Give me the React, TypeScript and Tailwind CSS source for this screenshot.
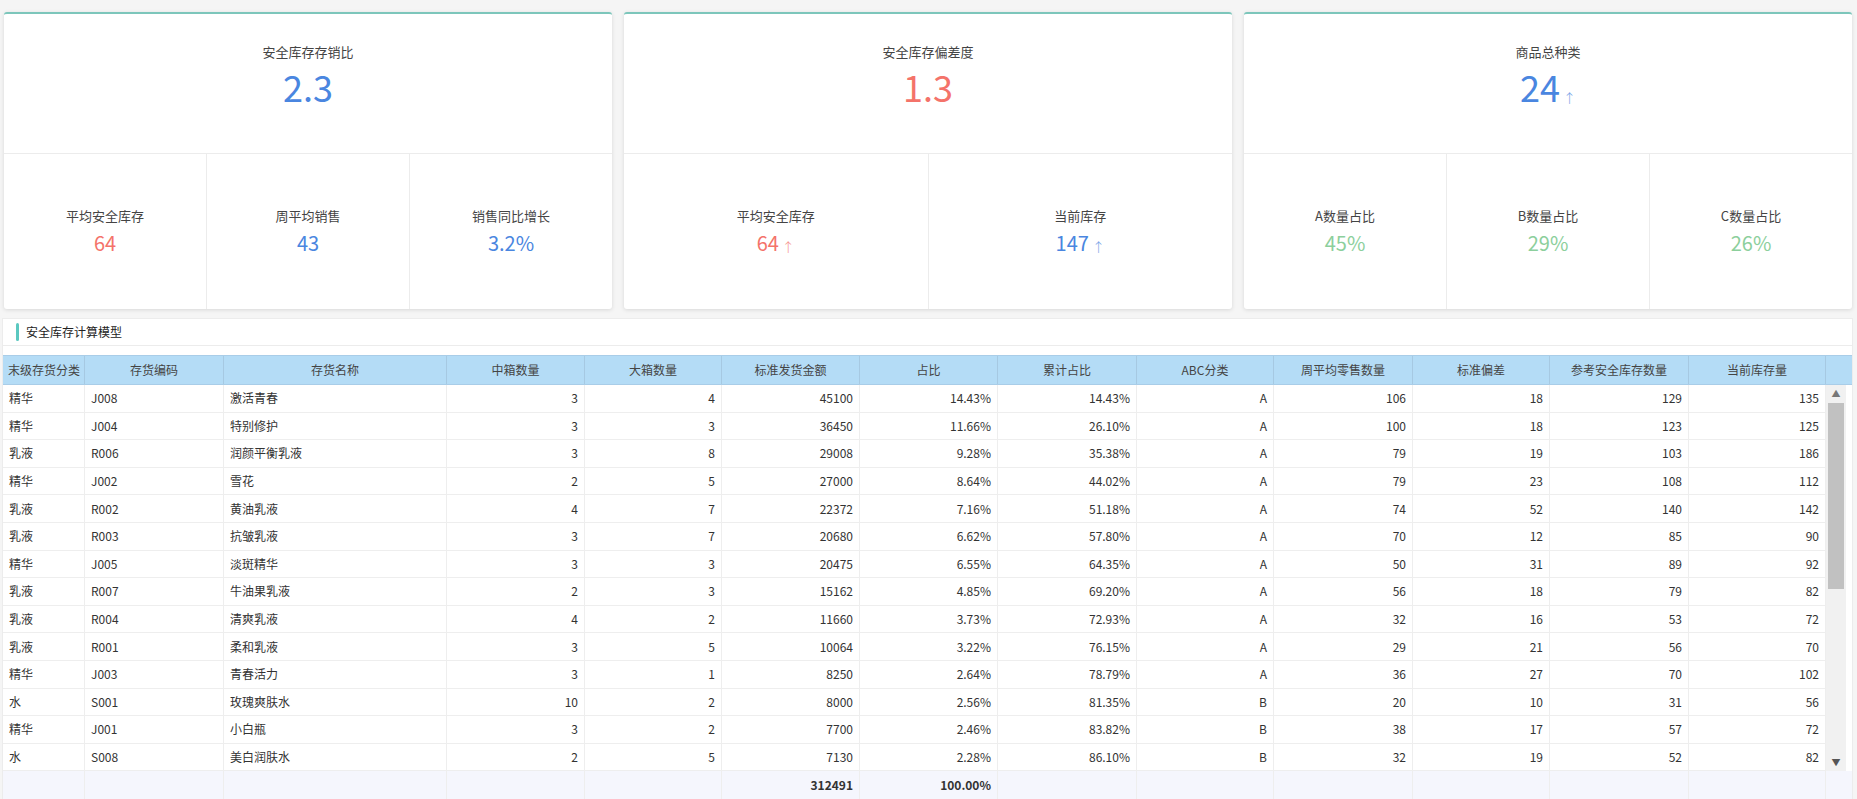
import React from "react";

const rows: (string | number)[][] = [
  ["精华","J008","激活青春",3,4,45100,"14.43%","14.43%","A",106,18,129,135],
  ["精华","J004","特别修护",3,3,36450,"11.66%","26.10%","A",100,18,123,125],
  ["乳液","R006","润颜平衡乳液",3,8,29008,"9.28%","35.38%","A",79,19,103,186],
  ["精华","J002","雪花",2,5,27000,"8.64%","44.02%","A",79,23,108,112],
  ["乳液","R002","黄油乳液",4,7,22372,"7.16%","51.18%","A",74,52,140,142],
  ["乳液","R003","抗皱乳液",3,7,20680,"6.62%","57.80%","A",70,12,85,90],
  ["精华","J005","淡斑精华",3,3,20475,"6.55%","64.35%","A",50,31,89,92],
  ["乳液","R007","牛油果乳液",2,3,15162,"4.85%","69.20%","A",56,18,79,82],
  ["乳液","R004","清爽乳液",4,2,11660,"3.73%","72.93%","A",32,16,53,72],
  ["乳液","R001","柔和乳液",3,5,10064,"3.22%","76.15%","A",29,21,56,70],
  ["精华","J003","青春活力",3,1,8250,"2.64%","78.79%","A",36,27,70,102],
  ["水","S001","玫瑰爽肤水",10,2,8000,"2.56%","81.35%","B",20,10,31,56],
  ["精华","J001","小白瓶",3,2,7700,"2.46%","83.82%","B",38,17,57,72],
  ["水","S008","美白润肤水",2,5,7130,"2.28%","86.10%","B",32,19,52,82],
];
const heads = ["末级存货分类","存货编码","存货名称","中箱数量","大箱数量","标准发货金额","占比","累计占比","ABC分类","周平均零售数量","标准偏差","参考安全库存数量","当前库存量"];
const widths = [82,139,223,138,137,138,138,139,137,139,137,139,137];

function Card({ title, value, color, arrow, subs }: { title: string; value: string; color: string; arrow?: boolean; subs: { l: string; v: string; c: string; a?: boolean }[] }) {
  return (
    <div className="w-[608px] h-[297px] bg-white border-t-2 border-[#7cc6bb] rounded-[3px] shadow-[0_1px_4px_rgba(0,0,0,0.12)] flex flex-col">
      <div className="h-[140px] flex flex-col items-center border-b border-[#ececec]">
        <div className="mt-[28px] text-[13px] text-[#444]">{title}</div>
        <div className={`mt-[2px] text-[36px] leading-[44px] ${color} flex items-end`}>
          {value}{arrow && <span className="text-[13px] leading-[20px] ml-[3px] font-light opacity-80">↑</span>}
        </div>
      </div>
      <div className="flex-1 flex">
        {subs.map((s, i) => (
          <div key={i} className={`flex-1 flex flex-col items-center justify-center ${i > 0 ? "border-l border-[#ececec]" : ""}`}>
            <div className="text-[13px] text-[#444]">{s.l}</div>
            <div className={`mt-[4px] text-[20px] leading-[28px] ${s.c} flex items-end`}>
              {s.v}{s.a && <span className="text-[13px] leading-[20px] ml-[3px] font-light opacity-80">↑</span>}
            </div>
          </div>
        ))}
      </div>
    </div>
  );
}

export default function App() {
  const blue = "text-[#4a86e0]", red = "text-[#f4736a]", green = "text-[#8ccf9c]";
  return (
    <div className="w-[1857px] h-[799px] bg-[#f5f5f5] overflow-hidden text-[#333]" style={{ fontFamily: '"Noto Sans CJK SC","Noto Sans",sans-serif' }}>
      <div className="flex gap-[12px] pl-[4px] pt-[12px]">
        <Card title="安全库存存销比" value="2.3" color={blue} subs={[{ l: "平均安全库存", v: "64", c: red }, { l: "周平均销售", v: "43", c: blue }, { l: "销售同比增长", v: "3.2%", c: blue }]} />
        <Card title="安全库存偏差度" value="1.3" color={red} subs={[{ l: "平均安全库存", v: "64", c: red, a: true }, { l: "当前库存", v: "147", c: blue, a: true }]} />
        <Card title="商品总种类" value="24" color={blue} arrow subs={[{ l: "A数量占比", v: "45%", c: green }, { l: "B数量占比", v: "29%", c: green }, { l: "C数量占比", v: "26%", c: green }]} />
      </div>
      <div className="ml-[2px] mt-[9px] w-[1851px] bg-white border border-[#ececec] flex flex-col">
        <div className="h-[27px] flex items-center border-b border-[#ececec]">
          <div className="ml-[13px] w-[3px] h-[18px] bg-[#5bc8c0] rounded-sm" />
          <div className="ml-[7px] text-[12px] text-[#222]">安全库存计算模型</div>
        </div>
        <div className="h-[9px]" />
        <div className="flex h-[30px] bg-[#b4dcf6] border-t border-b border-[#a9cde8] text-[12px] text-[#444]">
          {heads.map((h, i) => (
            <div key={i} style={{ width: widths[i] }} className={`flex items-center shrink-0 border-r border-[#a6c9e2] ${i === 0 ? "pl-[5px]" : "justify-center"}`}>{h}</div>
          ))}
          <div className="flex-1" />
        </div>
        <div className="flex">
          <div className="flex flex-col">
            {rows.map((r, ri) => (
              <div key={ri} className="flex h-[27.6px] border-b border-[#eeeeee] text-[12px] text-[#333]">
                {r.map((c, ci) => (
                  <div key={ci} style={{ width: widths[ci] }} className={`shrink-0 flex items-center border-r border-[#eeeeee] px-[6px] ${ci < 3 ? "" : "justify-end"}`}>{c}</div>
                ))}
              </div>
            ))}
          </div>
          <div className="w-[20px] bg-[#f1f1f1] flex flex-col items-center">
            <div className="h-[18px] flex items-center text-[9px] text-[#777]">▲</div>
            <div className="w-[16px] h-[186px] bg-[#c1c1c1]" />
            <div className="flex-1" />
            <div className="h-[18px] flex items-center text-[9px] text-[#555]">▼</div>
          </div>
        </div>
        <div className="flex h-[28px] bg-[#f5f6fd] text-[12px] font-bold text-[#333]">
          {widths.map((w, i) => (
            <div key={i} style={{ width: w }} className="shrink-0 flex items-center justify-end px-[6px] border-r border-[#eeeeee]">
              {i === 5 ? "312491" : i === 6 ? "100.00%" : ""}
            </div>
          ))}
        </div>
      </div>
    </div>
  );
}
